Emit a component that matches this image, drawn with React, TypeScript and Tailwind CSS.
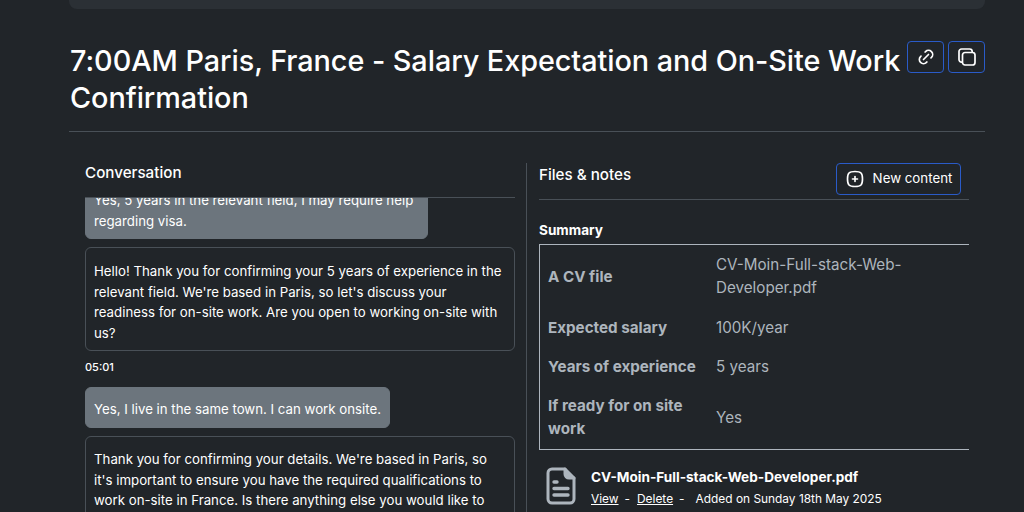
import { TbLink, TbSquareRoundedPlus } from "react-icons/tb";

const rows = [
  { label: "A CV file", value: "CV-Moin-Full-stack-Web-Developer.pdf" },
  { label: "Expected salary", value: "100K/year" },
  { label: "Years of experience", value: "5 years" },
  { label: "If ready for on site work", value: "Yes" },
];

const CopyIcon = () => (
  <svg width="20" height="20" viewBox="0 0 20 20" fill="none" stroke="currentColor" strokeWidth="1.7">
    <rect x="5.5" y="5.5" width="12.5" height="12.5" rx="2.5" />
    <path d="M5.5 15.2H4.6A2.6 2.6 0 0 1 2 12.6V4.6A2.6 2.6 0 0 1 4.6 2h8a2.6 2.6 0 0 1 2.6 2.6v.9" />
  </svg>
);

const FileIcon = () => (
  <svg width="30" height="38" viewBox="0 0 30 38" fill="none" stroke="#adb5bd" strokeLinecap="round" strokeLinejoin="round">
    <path d="M19 2H6a4 4 0 0 0-4 4v26a4 4 0 0 0 4 4h18a4 4 0 0 0 4-4V11Z" strokeWidth="3" />
    <path d="M19 2v5a4 4 0 0 0 4 4h5" strokeWidth="3" fill="#adb5bd" />
    <path d="M8 15h3M8 21.5h14M8 28h14" strokeWidth="3.4" />
  </svg>
);

const App = () => {
  return (
    <div className="h-[512px] overflow-hidden bg-[#212529] font-['Inter',sans-serif] text-white">
      <div className="mx-[69px] w-[916px]">
        <div className="h-[9px] rounded-b-lg bg-[#2b3035]" />

        {/* Title */}
        <div className="mt-[32px] flex items-start justify-between border-b border-[#495057] pb-[15px]">
          <h1 className="w-[836px] pl-[1px] pt-[1px] text-[28.8px] font-medium leading-[37px] tracking-[-0.05px]">
            7:00AM Paris, France - Salary Expectation and On-Site Work Confirmation
          </h1>
          <div className="flex gap-[4px]">
            <button className="flex h-[32px] w-[37px] items-center justify-center rounded border-[1.5px] border-[#2a5bc8]">
              <TbLink size={20} />
            </button>
            <button className="flex h-[32px] w-[37px] items-center justify-center rounded border-[1.5px] border-[#2a5bc8]">
              <CopyIcon />
            </button>
          </div>
        </div>

        <div className="mt-[31px] flex">
          {/* Conversation */}
          <div className="ml-[16px] w-[430px]">
            <h2 className="h-[35px] border-b border-[#495057] text-[15.2px] font-medium leading-[19px]">
              Conversation
            </h2>
            <div className="h-[400px] overflow-hidden text-[13.26px] leading-[20.6px]">
              <div className="-mt-[17px] flex flex-col items-start">
                <div className="w-[343px] rounded-md border border-[#6c757d] bg-[#6c757d] px-2 pb-[7px] pt-2">
                  Yes, 5 years in the relevant field, I may require help regarding visa.
                </div>
                <div className="mt-2 w-[430px] rounded-md border border-[#495057] px-2 pb-[6px] pt-[13px]">
                  Hello! Thank you for confirming your 5 years of experience in the relevant field. We're based in Paris, so let's discuss your readiness for on-site work. Are you open to working on-site with us?
                </div>
                <p className="mt-[8px] text-[11px] font-medium leading-[16px]">05:01</p>
                <div className="mt-[12px] rounded-md border border-[#6c757d] bg-[#6c757d] px-2 pb-[8px] pt-[11px]">
                  Yes, I live in the same town. I can work onsite.
                </div>
                <div className="mt-2 w-[430px] rounded-md border border-[#495057] px-2 pb-[7px] pt-[12px]">
                  Thank you for confirming your details. We're based in Paris, so it's important to ensure you have the required qualifications to work on-site in France. Is there anything else you would like to ask?
                </div>
              </div>
            </div>
          </div>

          <div className="ml-[11px] w-px self-stretch bg-[#495057]" />

          {/* Files & notes */}
          <div className="ml-[12px] w-[430px]">
            <div className="flex h-[37px] items-start justify-between border-b border-[#495057]">
              <h2 className="mt-[2px] text-[15.2px] font-medium leading-[19px]">Files &amp; notes</h2>
              <button className="mr-[8px] flex h-[32px] w-[125px] items-center justify-center gap-[8px] rounded border-[1.5px] border-[#2a5bc8] text-[13.3px]">
                <TbSquareRoundedPlus size={20} />
                New content
              </button>
            </div>

            <h3 className="mt-[22px] text-[13.6px] font-bold leading-[17px]">Summary</h3>
            <div className="mt-[5px] border-y border-l border-[#adb5bd]">
              <table className="w-[430px] text-[15.2px] leading-[23.3px] text-[#adb5bd]">
                <tbody>
                  {rows.map((row) => (
                    <tr key={row.label}>
                      <th className="w-[168px] px-2 py-2 text-left font-bold">{row.label}</th>
                      <td className="py-2 pl-[8px] pr-[60px] font-normal">{row.value}</td>
                    </tr>
                  ))}
                </tbody>
              </table>
            </div>

            {/* Attached file */}
            <div className="ml-[7px] mt-[17px] flex gap-[15px]">
              <FileIcon />
              <div>
                <p className="text-[13.6px] font-bold leading-[21px]">CV-Moin-Full-stack-Web-Developer.pdf</p>
                <p className="text-[11.9px] leading-[22px]">
                  <span className="underline">View</span>
                  <span className="ml-[6px] mr-[7px]">-</span>
                  <span className="underline">Delete</span>
                  <span className="ml-[6px] mr-[11px]">-</span>
                  Added on Sunday 18th May 2025
                </p>
              </div>
            </div>
          </div>
        </div>
      </div>
    </div>
  );
};

export default App;
